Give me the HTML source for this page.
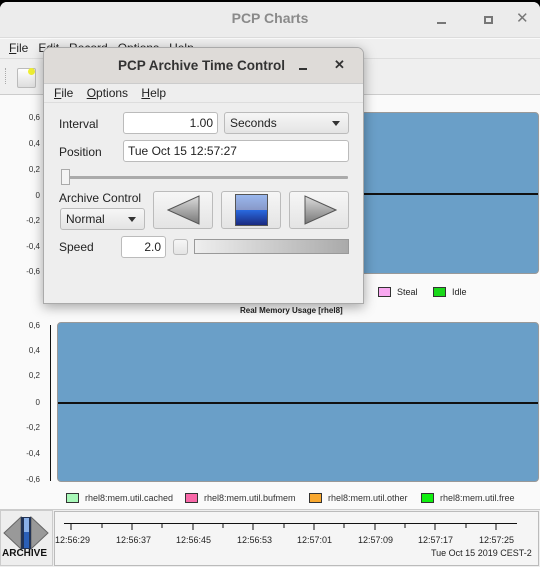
<!DOCTYPE html>
<html><head><style>
*{margin:0;padding:0;box-sizing:border-box}
body{width:540px;height:567px;background:#000;font-family:"Liberation Sans",sans-serif;position:relative;overflow:hidden}
.abs{position:absolute}
.win{left:0;top:2px;width:540px;height:565px;background:#fafafa;border-radius:7px 7px 0 0;overflow:hidden}
.tb{left:0;top:0;width:540px;height:36px;background:#ececec;border-bottom:1px solid #dcdcdc}
.t9{font-size:9px;color:#222}
.yl{font-size:8px;color:#333;text-align:right;width:40px}
.lg{width:13px;height:10px;border:1px solid #333}
u{text-decoration:underline}
.dlg{left:43px;top:47px;width:321px;height:257px;background:#eeeeee;border:1px solid #aaa;border-radius:7px 7px 0 0;box-shadow:0 3px 12px rgba(0,0,0,.35);overflow:hidden}
.inp{background:#fff;border:1px solid #bbb;border-radius:3px;font-size:12px;color:#222;height:22px;line-height:20px;padding:0 4px}
.btn{background:linear-gradient(#f6f6f6,#e4e4e4);border:1px solid #bbb;border-radius:3px}
.lbl{font-size:12px;color:#222}
</style></head><body>
<div class="abs win">
 <div class="abs tb"></div>
 <div class="abs" style="left:0;width:540px;top:8px;text-align:center;font-size:14px;color:#8a8a8a;font-weight:bold">PCP Charts</div>
 <div class="abs" style="left:437px;top:20px;width:9px;height:2px;background:#777"></div>
 <div class="abs" style="left:484px;top:14px;width:9px;height:8px;border:2px solid #777"></div>
 <div class="abs" style="left:516px;top:7px;font-size:15px;color:#777">✕</div>
 <div class="abs" style="top:37px;left:0;width:540px;height:20px;background:#efefef;border-bottom:1px solid #ddd"></div>
 <div class="abs lbl" style="left:9px;top:39px"><u>F</u>ile&nbsp;&nbsp;&nbsp;Edit&nbsp;&nbsp;&nbsp;Record&nbsp;&nbsp;&nbsp;Options&nbsp;&nbsp;&nbsp;Help</div>
 <div class="abs" style="top:57px;left:0;width:540px;height:36px;background:#efefef;border-bottom:1px solid #ccc"></div>
 <div class="abs" style="left:5px;top:66px;width:2px;height:16px;border-left:1px dotted #aaa"></div>
 <div class="abs" style="left:17px;top:66px;width:19px;height:20px;background:linear-gradient(#fff,#ddd);border:1px solid #bbb;border-radius:2px"></div>
 <div class="abs" style="left:28px;top:66px;width:7px;height:7px;background:#ee3;border-radius:50%"></div>
</div>
<!-- chart 1 -->
<div class="abs" style="left:57px;top:112px;width:482px;height:162px;background:#6a9fc8;border-radius:4px;border:1px solid #999"></div>
<div class="abs" style="left:58px;top:193px;width:480px;height:2px;background:#111"></div>
<div class="abs yl" style="left:0;top:113px">0,6</div>
<div class="abs yl" style="left:0;top:139px">0,4</div>
<div class="abs yl" style="left:0;top:165px">0,2</div>
<div class="abs yl" style="left:0;top:191px">0</div>
<div class="abs yl" style="left:0;top:216px">-0,2</div>
<div class="abs yl" style="left:0;top:242px">-0,4</div>
<div class="abs yl" style="left:0;top:267px">-0,6</div>
<div class="abs t9" style="left:350px;top:287px">ait</div>
<div class="abs lg" style="left:378px;top:287px;background:#f8a8f0"></div>
<div class="abs t9" style="left:397px;top:287px">Steal</div>
<div class="abs lg" style="left:433px;top:287px;background:#1ad81a"></div>
<div class="abs t9" style="left:452px;top:287px">Idle</div>
<div class="abs" style="left:240px;top:306px;font-size:8px;font-weight:bold;color:#222">Real Memory Usage [rhel8]</div>
<!-- chart 2 -->
<div class="abs" style="left:57px;top:322px;width:482px;height:160px;background:#6a9fc8;border-radius:4px;border:1px solid #999"></div>
<div class="abs" style="left:58px;top:402px;width:480px;height:2px;background:#111"></div>
<div class="abs" style="left:50px;top:325px;width:1px;height:156px;background:#111"></div>
<div class="abs yl" style="left:0;top:321px">0,6</div>
<div class="abs yl" style="left:0;top:346px">0,4</div>
<div class="abs yl" style="left:0;top:371px">0,2</div>
<div class="abs yl" style="left:0;top:398px">0</div>
<div class="abs yl" style="left:0;top:423px">-0,2</div>
<div class="abs yl" style="left:0;top:449px">-0,4</div>
<div class="abs yl" style="left:0;top:475px">-0,6</div>
<div class="abs lg" style="left:66px;top:493px;background:#a8f8b8"></div>
<div class="abs t9" style="left:85px;top:493px;color:#333">rhel8:mem.util.cached</div>
<div class="abs lg" style="left:185px;top:493px;background:#f868a8"></div>
<div class="abs t9" style="left:204px;top:493px;color:#333">rhel8:mem.util.bufmem</div>
<div class="abs lg" style="left:309px;top:493px;background:#f8a830"></div>
<div class="abs t9" style="left:328px;top:493px;color:#333">rhel8:mem.util.other</div>
<div class="abs lg" style="left:421px;top:493px;background:#10f010"></div>
<div class="abs t9" style="left:440px;top:493px;color:#333">rhel8:mem.util.free</div>
<!-- bottom -->
<div class="abs" style="left:0;top:509px;width:540px;height:58px;background:#eee;border-top:1px solid #ccc"></div>
<div class="abs" style="left:0;top:510px;width:53px;height:56px;border:1px solid #ccc;background:#eee"></div>
<svg class="abs" style="left:3px;top:515px" width="46" height="36" viewBox="0 0 46 36"><polygon points="1,18 18,2 18,34" fill="#999" stroke="#666"/><polygon points="45,18 28,2 28,34" fill="#999" stroke="#666"/><rect x="18" y="2" width="10" height="32" fill="#235" /><rect x="21" y="3" width="5" height="14" fill="#8ab0e8"/><rect x="21" y="17" width="5" height="16" fill="#2a5fb8"/></svg>
<div class="abs" style="left:2px;top:548px;font-size:10px;font-weight:bold;color:#111">ARCHIVE</div>
<div class="abs" style="left:54px;top:511px;width:485px;height:55px;border:1px solid #bbb;background:#f5f5f5"></div>
<div class="abs" style="left:64px;top:523px;width:453px;height:1px;background:#111"></div>
<svg class="abs" style="left:0;top:523px" width="540" height="10">
<g stroke="#111"><line x1="71" y1="0" x2="71" y2="7"/><line x1="102" y1="0" x2="102" y2="5"/><line x1="132" y1="0" x2="132" y2="7"/><line x1="162" y1="0" x2="162" y2="5"/><line x1="193" y1="0" x2="193" y2="7"/><line x1="223" y1="0" x2="223" y2="5"/><line x1="253" y1="0" x2="253" y2="7"/><line x1="284" y1="0" x2="284" y2="5"/><line x1="314" y1="0" x2="314" y2="7"/><line x1="344" y1="0" x2="344" y2="5"/><line x1="375" y1="0" x2="375" y2="7"/><line x1="405" y1="0" x2="405" y2="5"/><line x1="435" y1="0" x2="435" y2="7"/><line x1="466" y1="0" x2="466" y2="5"/><line x1="496" y1="0" x2="496" y2="7"/></g></svg>
<div class="abs t9" style="left:55px;top:535px">12:56:29</div>
<div class="abs t9" style="left:116px;top:535px">12:56:37</div>
<div class="abs t9" style="left:176px;top:535px">12:56:45</div>
<div class="abs t9" style="left:237px;top:535px">12:56:53</div>
<div class="abs t9" style="left:297px;top:535px">12:57:01</div>
<div class="abs t9" style="left:358px;top:535px">12:57:09</div>
<div class="abs t9" style="left:418px;top:535px">12:57:17</div>
<div class="abs t9" style="left:479px;top:535px">12:57:25</div>
<div class="abs t9" style="left:431px;top:548px">Tue Oct 15 2019 CEST-2</div>
<!-- dialog -->
<div class="abs dlg">
 <div class="abs" style="left:0;top:0;width:321px;height:36px;background:#dedbd8;border-bottom:1px solid #ccc"></div>
 <div class="abs" style="left:74px;top:10px;font-size:13.5px;font-weight:bold;color:#333">PCP Archive Time Control</div>
 <div class="abs" style="left:255px;top:20px;width:8px;height:2px;background:#333"></div>
 <div class="abs" style="left:290px;top:9px;font-size:13px;font-weight:bold;color:#333">✕</div>
 <div class="abs" style="left:0;top:36px;width:321px;height:19px;border-bottom:1px solid #ddd"></div>
 <div class="abs lbl" style="left:10px;top:38px"><u>F</u>ile&nbsp;&nbsp;&nbsp;&nbsp;<u>O</u>ptions&nbsp;&nbsp;&nbsp;&nbsp;<u>H</u>elp</div>
 <div class="abs lbl" style="left:15px;top:69px">Interval</div>
 <div class="abs inp" style="left:79px;top:64px;width:95px;text-align:right">1.00</div>
 <div class="abs btn lbl" style="left:180px;top:64px;width:125px;height:22px;padding:3px 5px">Seconds<span style="position:absolute;right:8px;top:8px;border:4px solid transparent;border-top:5px solid #333;border-bottom:0"></span></div>
 <div class="abs lbl" style="left:15px;top:97px">Position</div>
 <div class="abs inp" style="left:79px;top:92px;width:226px">Tue Oct 15 12:57:27</div>
 <div class="abs" style="left:20px;top:128px;width:284px;height:3px;background:#aaa;border-radius:1px"></div>
 <div class="abs" style="left:17px;top:121px;width:9px;height:16px;background:#f4f4f4;border:1px solid #aaa"></div>
 <div class="abs lbl" style="left:15px;top:143px">Archive Control</div>
 <div class="abs btn lbl" style="left:16px;top:160px;width:85px;height:22px;padding:3px 5px">Normal<span style="position:absolute;right:8px;top:8px;border:4px solid transparent;border-top:5px solid #333;border-bottom:0"></span></div>
 <div class="abs btn" style="left:109px;top:143px;width:60px;height:38px"></div>
 <svg class="abs" style="left:123px;top:147px" width="34" height="30"><defs><linearGradient id="g" x1="0" y1="0" x2="0" y2="1"><stop offset="0" stop-color="#ddd"/><stop offset="1" stop-color="#777"/></linearGradient></defs><polygon points="1,15 32,1 32,29" fill="url(#g)" stroke="#555"/></svg>
 <div class="abs btn" style="left:177px;top:143px;width:60px;height:38px"></div>
 <div class="abs" style="left:191px;top:146px;width:33px;height:32px;border:1px solid #555;background:linear-gradient(#9ab8ee 0,#8898c8 50%,#2a6ae0 50%,#1a2a80 100%)"></div>
 <div class="abs btn" style="left:245px;top:143px;width:60px;height:38px"></div>
 <svg class="abs" style="left:259px;top:147px" width="34" height="30"><polygon points="33,15 2,1 2,29" fill="url(#g)" stroke="#555"/></svg>
 <div class="abs lbl" style="left:15px;top:192px">Speed</div>
 <div class="abs inp" style="left:77px;top:188px;width:45px;text-align:right">2.0</div>
 <div class="abs btn" style="left:129px;top:191px;width:15px;height:16px"></div>
 <div class="abs" style="left:150px;top:191px;width:155px;height:15px;border:1px solid #999;background:linear-gradient(90deg,#eee,#aaa)"></div>
</div>
</body></html>
